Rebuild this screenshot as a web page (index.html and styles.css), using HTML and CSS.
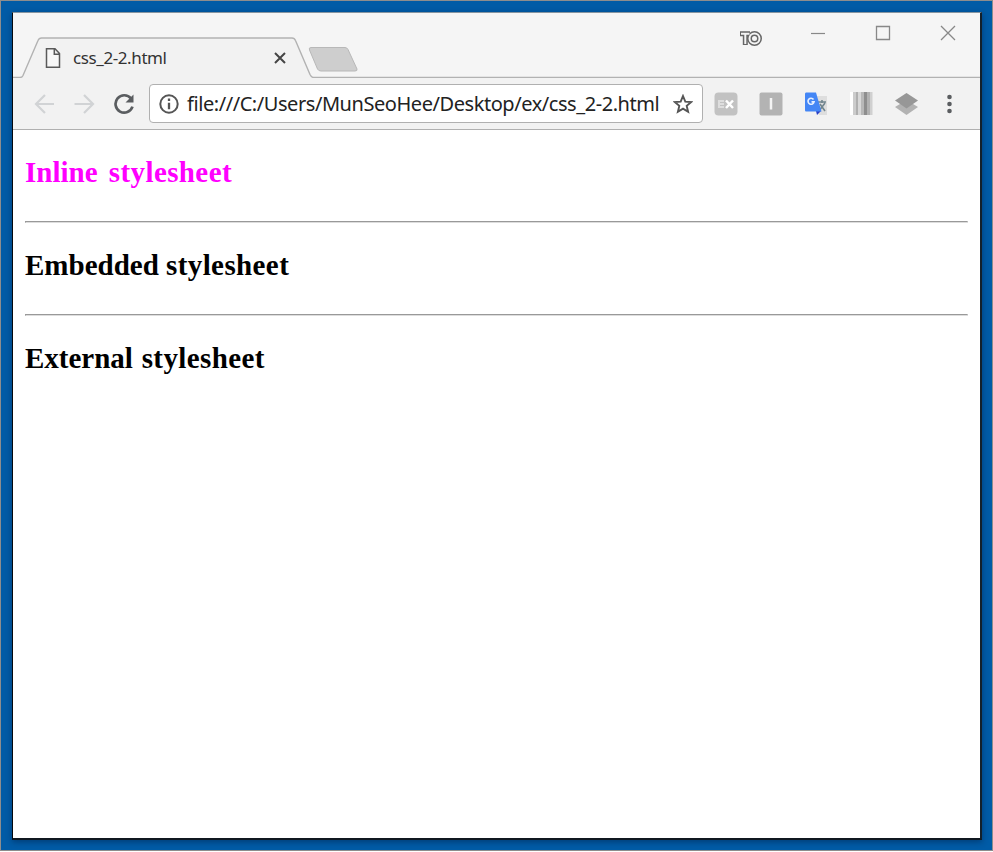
FILE: index.html
```html
<!DOCTYPE html>
<html lang="en">
<head>
<meta charset="utf-8">
<title>css_2-2.html</title>
<link rel="stylesheet" href="styles.css">
</head>
<body>
<div class="desktop">
<div class="window">
  <header class="tabstrip">
    <div class="tab">
      <svg class="tab-shape" width="967" height="65" viewBox="13 13 967 65"><path d="M13 77.500H20Q22 77.500 23 75.500L38 40.500Q39 38 41.500 38H292Q294.500 38 295.500 40.500L310 74.500Q311.500 77.500 313.500 77.500H980V79H13Z" fill="#f2f2f2" stroke="#b2b2b2" stroke-width="1.400"/></svg>
      <svg class="file-icon" width="16" height="22" viewBox="0 0 16 22"><path d="M1.500 1.700H10L14.500 6.500V20.300H1.500ZM9.300 1.700V7.200H14.500" fill="#f8f8f8" stroke="#5a5a5a" stroke-width="1.500"/></svg>
      <span class="tab-title">css_2-2.html</span>
      <svg class="tab-close" width="14" height="14" viewBox="0 0 14 14"><path d="M2 2L12 12M12 2L2 12" stroke="#454545" stroke-width="2"/></svg>
    </div>
    <svg class="new-tab" width="52" height="27" viewBox="0 0 52 27"><path d="M4 1.500H38Q40 1.500 41 3.500L50 23Q50.500 25 48 25H14Q11.500 25 10.500 23L2.500 4Q1.500 1.500 4 1.500Z" fill="#cecece" stroke="#b8b8b8"/></svg>
    <div class="controls">
      <svg width="24" height="17" viewBox="0 0 24 17"><g fill="none" stroke="#666" stroke-width="5"><path d="M1 3.800H11M6.300 3.800V15"/><circle cx="15.500" cy="8.500" r="5"/></g><g fill="none" stroke="#f4f4f4" stroke-width="2"><path d="M2 3.800H10.500M6.300 3.800V14"/><circle cx="15.500" cy="8.500" r="5"/></g></svg>
      <svg width="16" height="16" viewBox="0 0 16 16"><path d="M1 8.500H15" stroke="#888" stroke-width="1.200"/></svg>
      <svg width="16" height="16" viewBox="0 0 16 16"><path d="M1.500 1.500H14.500V14.500H1.500Z" fill="none" stroke="#888" stroke-width="1.300"/></svg>
      <svg width="16" height="16" viewBox="0 0 16 16"><path d="M1 1L15 15M15 1L1 15" stroke="#888" stroke-width="1.300"/></svg>
    </div>
  </header>
  <nav class="toolbar">
    <svg class="back" width="22" height="22" viewBox="0 0 22 22"><path d="M21 11H3.500M12 2L3 11L12 20" fill="none" stroke="#d1d3d5" stroke-width="2.200"/></svg>
    <svg class="forward" width="22" height="22" viewBox="0 0 22 22"><path d="M1.500 11H19.500M11 2L20 11L11 20" fill="none" stroke="#d1d3d5" stroke-width="2.200"/></svg>
    <svg class="reload" width="22" height="22" viewBox="0 0 22 22"><path d="M18 5.500A8.700 8.700 0 1 0 19.500 13.700" fill="none" stroke="#5a5d60" stroke-width="2.700"/><path d="M20.500 1.500V9.500H12.500Z" fill="#5a5d60"/></svg>
    <div class="address">
      <svg class="info" width="20" height="20" viewBox="0 0 20 20"><circle cx="10" cy="10" r="8.700" fill="none" stroke="#555" stroke-width="2"/><path d="M10 4.500V7M10 8.700V15.300" stroke="#555" stroke-width="2.300"/></svg>
      <span class="url">file:///C:/Users/MunSeoHee/Desktop/ex/css_2-2.html</span>
      <svg class="star" width="20" height="20" viewBox="0 0 20 20"><path d="M10 2L12.300 7.600L18.300 8L13.700 11.900L15.100 17.800L10 14.600L4.900 17.800L6.300 11.900L1.700 8L7.700 7.600Z" fill="none" stroke="#555" stroke-width="1.900"/></svg>
    </div>
    <div class="extensions">
      <svg width="24" height="24" viewBox="0 0 24 24"><rect x=".5" y=".5" width="23" height="23" rx="4" fill="#c2c2c2"/><path d="M4 8H10V16H4Z" fill="#dedede"/><path d="M6 10.500H10M6 13.500H10" stroke="#c2c2c2"/><path d="M12 8.500L19 16M19 8.500L12 16" stroke="#fff" stroke-width="2.500"/></svg>
      <svg width="24" height="24" viewBox="0 0 24 24"><rect x=".5" y=".5" width="23" height="23" rx="2" fill="#b3b3b3"/><path d="M12 6V17.500" stroke="#f4f4f4" stroke-width="2.500"/></svg>
      <svg width="24" height="24" viewBox="0 0 24 24"><path d="M10 4H23V23H15Z" fill="#dedede"/><path d="M13 10H22M18 8V11M15 19L21 11M16 12L21 19" stroke="#71858e" stroke-width="1.600"/><path d="M12 19H17L13 23Z" fill="#283fc5"/><path d="M2 .5H12L17.500 19.500H2Q1 19.500 1 18V2Q1 .5 2 .5Z" fill="#4486f5"/><path d="M9.500 7.500A3 3 0 1 0 10 9.800H7.500" fill="none" stroke="#e4eeff" stroke-width="1.700"/></svg>
      <svg width="24" height="24" viewBox="0 0 24 24"><path d="M1 0H4V23H1Z" fill="#fff"/><path d="M4 0H7V23H4Z" fill="#ccc"/><path d="M7 0H9V23H7Z" fill="#b0b0b0"/><path d="M9 0H12V23H9Z" fill="#d8d8d8"/><path d="M12 0H15V23H12Z" fill="#b8b8b8"/><path d="M15 0H18V23H15Z" fill="#8e8e8e"/><path d="M18 0H21V23H18Z" fill="#b1b1b1"/><path d="M21 0H23.500V23H21Z" fill="#d0d0d0"/></svg>
      <svg width="24" height="24" viewBox="0 0 24 24"><path d="M1 15L12.500 8L24 15L12.500 23Z" fill="#b2b2b2"/><path d="M1 8.500L12.500 1L24 8.500L12.500 16.500Z" fill="#979797"/></svg>
      <svg class="menu" width="6" height="20" viewBox="0 0 6 20"><g fill="#5a5d60"><circle cx="3.500" cy="3" r="2.300"/><circle cx="3.500" cy="10" r="2.300"/><circle cx="3.500" cy="17" r="2.300"/></g></svg>
    </div>
  </nav>
  <main class="page">
    <h3 class="inline-title">Inline <span>stylesheet</span></h3>
    <hr>
    <h3 class="embedded-title">Embedded <span>stylesheet</span></h3>
    <hr>
    <h3 class="external-title">External <span>stylesheet</span></h3>
  </main>
</div>
</div>
</body>
</html>
```
FILE: styles.css
```css
* { box-sizing: border-box; }
body { margin: 0; background: #fff; overflow: hidden; }
svg { display: block; flex: none; }

.desktop {
  width: 993px;
  height: 851px;
  padding: 11px;
  border: 1px solid #8d8d8d;
  background: #005ba6;
  overflow: hidden;
}
.window {
  width: 970px;
  height: 828px;
  display: flex;
  flex-direction: column;
  background: #fff;
  border-style: solid;
  border-width: 1px 2px 2px 1px;
  border-color: #8795a0 #14202a #101820 #05080c;
  box-shadow: 0 2px 6px rgba(0, 25, 60, .45);
}

.tabstrip {
  position: relative;
  height: 65px;
  flex: none;
  display: flex;
  align-items: flex-start;
  background: #f5f5f5;
}
.tab {
  width: 294px;
  height: 65px;
  display: flex;
  align-items: center;
  padding: 25px 0 0 32px;
}
.tab-shape { position: absolute; left: 0; top: 0; }
.file-icon, .tab-title, .tab-close, .new-tab, .controls { position: relative; }
.tab-title {
  width: 200px;
  margin-left: 12px;
  font: 17px/24px "Noto Sans", sans-serif;
  letter-spacing: -.4px;
  color: #333;
  white-space: nowrap;
}
.new-tab { margin-top: 33px; }
.controls { display: flex; margin: 12px 0 0 380px; }
.controls svg:first-child { margin-top: 5px; }
.controls svg:nth-child(2) { margin-left: 46.5px; }
.controls svg:nth-child(n+3) { margin-left: 49px; }

.toolbar {
  height: 52px;
  flex: none;
  display: flex;
  align-items: center;
  padding-left: 20px;
  background: #f2f2f2;
  border-bottom: 1px solid #b0b0b0;
}
.forward { margin-left: 18px; }
.reload { margin-left: 18px; }
.address {
  width: 554px;
  height: 39px;
  margin-left: 14px;
  display: flex;
  align-items: center;
  padding-left: 9px;
  background: #fff;
  border: 1.5px solid #b0b0b0;
  border-radius: 4px;
}
.url {
  width: 477px;
  margin-left: 8px;
  font: 20px/28px "Noto Sans", sans-serif;
  letter-spacing: -.44px;
  color: #222;
  white-space: nowrap;
}
.star { margin-left: 9px; }
.extensions { display: flex; align-items: center; margin-left: 11px; gap: 21px; }
.menu { margin-left: 7px; }

.page { padding: 0 12px; }
.page h3 {
  margin: 0;
  height: 91px;
  padding-top: 25px;
  font: bold 29px/34px "Liberation Serif", serif;
  white-space: nowrap;
}
.page h3 span { letter-spacing: .4px; }
.page .inline-title { color: #f0f; word-spacing: 4px; }
.page .external-title { word-spacing: 1.5px; }
.page hr {
  height: 2px;
  margin: 0;
  border: 1px solid;
  border-color: #999 #ddd #ddd #999;
}
```
